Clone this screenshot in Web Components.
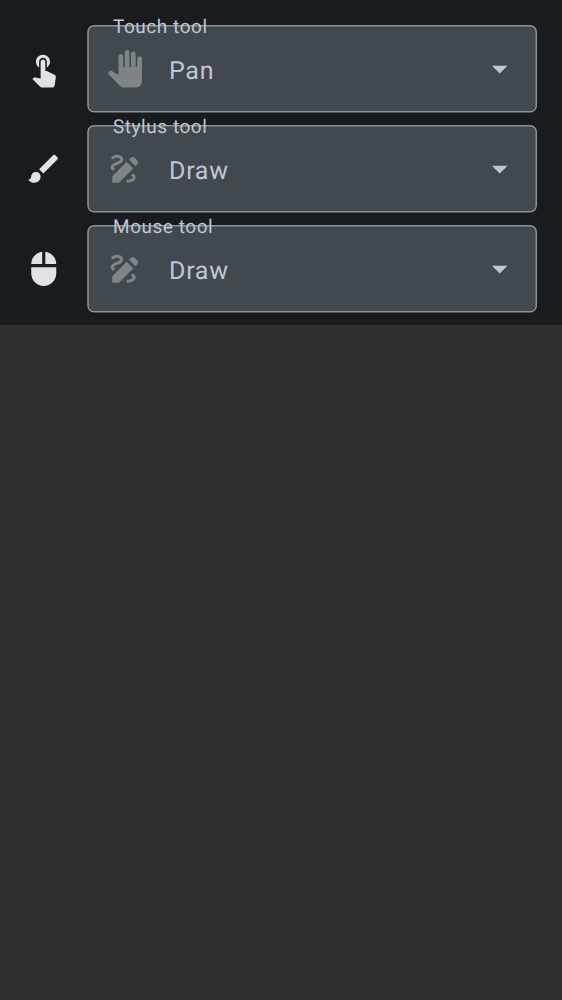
<!DOCTYPE html>
<html lang="en">
<head>
<meta charset="utf-8">
<title>Input tools</title>
<style>
html, body { margin: 0; height: 100%; background: #303030; }
body { font-family: Roboto, "Noto Sans", sans-serif; overflow: hidden; text-rendering: geometricPrecision; }
</style>
</head>
<body>
<tool-settings>
  <tool-row device="touch" tool="pan"><span slot="label">Touch tool</span>Pan</tool-row>
  <tool-row device="brush" tool="draw"><span slot="label">Stylus tool</span>Draw</tool-row>
  <tool-row device="mouse" tool="draw"><span slot="label">Mouse tool</span>Draw</tool-row>
</tool-settings>
<script>
const ICONS = {
  touch: 'M9 11.24V7.5C9 6.12 10.12 5 11.5 5S14 6.12 14 7.5v3.74c1.21-.81 2-2.18 2-3.74C16 5.01 13.99 3 11.5 3S7 5.01 7 7.5c0 1.56.79 2.93 2 3.74zm9.84 4.63l-4.54-2.26c-.17-.07-.35-.11-.54-.11H13v-6c0-.83-.67-1.5-1.5-1.5S10 6.67 10 7.5v10.74l-3.43-.72c-.08-.01-.15-.03-.24-.03-.31 0-.59.13-.79.33l-.79.8 4.94 4.94c.27.27.65.44 1.06.44h6.79c.75 0 1.33-.55 1.44-1.28l.75-5.27c.01-.07.02-.14.02-.2 0-.62-.38-1.16-.91-1.38z',
  brush: 'M7 14c-1.66 0-3 1.34-3 3 0 1.31-1.16 2-2 2 .92 1.22 2.49 2 4 2 2.21 0 4-1.79 4-4 0-1.66-1.34-3-3-3zm13.71-9.37l-1.34-1.34c-.39-.39-1.02-.39-1.41 0L9 12.25 11.75 15l8.96-8.96c.39-.39.39-1.02 0-1.41z',
  mouse: 'M13 1.07V9h7c0-4.08-3.05-7.44-7-7.93zM4 15c0 4.42 3.58 8 8 8s8-3.58 8-8v-4H4v4zm7-13.93C7.05 1.56 4 4.92 4 9h7V1.07z',
  pan: 'M23 5.5V20c0 2.2-1.8 4-4 4h-7.3c-1.08 0-2.1-.43-2.85-1.19L1 14.83s1.26-1.23 1.3-1.25c.22-.19.49-.29.79-.29.22 0 .42.06.6.16.04.01 4.31 2.46 4.31 2.46V4c0-.83.67-1.5 1.5-1.5S11 3.17 11 4v7h1V1.5c0-.83.67-1.5 1.5-1.5S15 .67 15 1.5V11h1V2.5c0-.83.67-1.5 1.5-1.5s1.5.67 1.5 1.5V11h1V5.5c0-.83.67-1.5 1.5-1.5s1.5.67 1.5 1.5z',
  draw: 'M18.85 10.39l1.06-1.06c.78-.78.78-2.05 0-2.83L18.5 5.09c-.78-.78-2.05-.78-2.83 0l-1.06 1.06 4.24 4.24zm-5.66-2.83L4 16.76V21h4.24l9.19-9.19-4.24-4.25zM19 17.5c0 2.19-2.54 3.5-5 3.5-.55 0-1-.45-1-1s.45-1 1-1c1.54 0 3-.73 3-1.5 0-.47-.48-.87-1.23-1.2l1.48-1.48c1.07.63 1.75 1.47 1.75 2.68zM4.58 13.35C3.61 12.79 3 12.06 3 11c0-1.8 1.89-2.63 3.56-3.36C7.59 7.18 9 6.56 9 6c0-.41-.78-1-2-1-1.26 0-1.8.61-1.83.64-.35.41-.98.46-1.4.12-.41-.34-.49-.95-.15-1.38C3.73 4.24 4.76 3 7 3s4 1.32 4 3c0 1.87-1.93 2.72-3.64 3.47C6.42 9.88 5 10.5 5 11c0 .31.43.6 1.07.86l-1.49 1.49z',
  arrow: 'M7 10l5 5 5-5z'
};

customElements.define('md-icon', class extends HTMLElement {
  connectedCallback() {
    if (this.shadowRoot) return;
    this.attachShadow({ mode: 'open' }).innerHTML = `
      <style>
        :host { display: block; flex: none; width: 37.5px; height: 37.5px; }
        svg { display: block; width: 100%; height: 100%; fill: currentColor; overflow: visible; }
      </style>
      <svg viewBox="0 0 24 24" aria-hidden="true"><path d="${ICONS[this.getAttribute('name')]}"/></svg>`;
  }
});

customElements.define('tool-select', class extends HTMLElement {
  connectedCallback() {
    if (this.shadowRoot) return;
    this.attachShadow({ mode: 'open' }).innerHTML = `
      <style>
        :host { display: block; position: relative; height: 87.5px; color: #c0c7cf; }
        .frame { display: block; position: absolute; inset: 0; width: 100%; height: 100%; overflow: visible; }
        .frame rect { fill: #41484e; stroke: #8a9297; stroke-width: 1.5px; width: calc(100% - 1.75px); height: calc(100% - 1.5px); }
        .content { position: relative; display: flex; align-items: center; height: 100%; box-sizing: border-box; padding: 0 19px 0 19.25px; }
        .tool { color: #7f8487; }
        .value { flex: 1; margin-left: 25.25px; padding-top: 5px; font-size: 25px; line-height: 37.5px; letter-spacing: .72px; }
        .label { position: absolute; left: 26px; top: -9px; font-size: 19px; line-height: 22px; letter-spacing: .54px; white-space: nowrap; }
      </style>
      <svg class="frame" aria-hidden="true"><rect x="1" y=".75" rx="6"/></svg>
      <div class="content">
        <md-icon class="tool" name="${this.getAttribute('tool')}"></md-icon>
        <div class="value"><slot></slot></div>
        <md-icon name="arrow"></md-icon>
      </div>
      <div class="label"><slot name="label"></slot></div>`;
  }
});

customElements.define('tool-row', class extends HTMLElement {
  connectedCallback() {
    if (this.shadowRoot) return;
    this.attachShadow({ mode: 'open' }).innerHTML = `
      <style>
        :host { display: flex; align-items: center; gap: 24.5px; height: 87.5px; color: #e1e2e5; }
        tool-select { flex: 1; }
      </style>
      <md-icon name="${this.getAttribute('device')}"></md-icon>
      <tool-select tool="${this.getAttribute('tool')}"><slot name="label" slot="label"></slot><slot></slot></tool-select>`;
  }
});

customElements.define('tool-settings', class extends HTMLElement {
  constructor() {
    super();
    this.attachShadow({ mode: 'open' }).innerHTML = `
      <style>
        :host { display: flex; flex-direction: column; gap: 12.5px; box-sizing: border-box; height: 325px; padding: 25px 25px 12.5px; background: #191c1e; }
      </style>
      <slot></slot>`;
  }
});
</script>
</body>
</html>
